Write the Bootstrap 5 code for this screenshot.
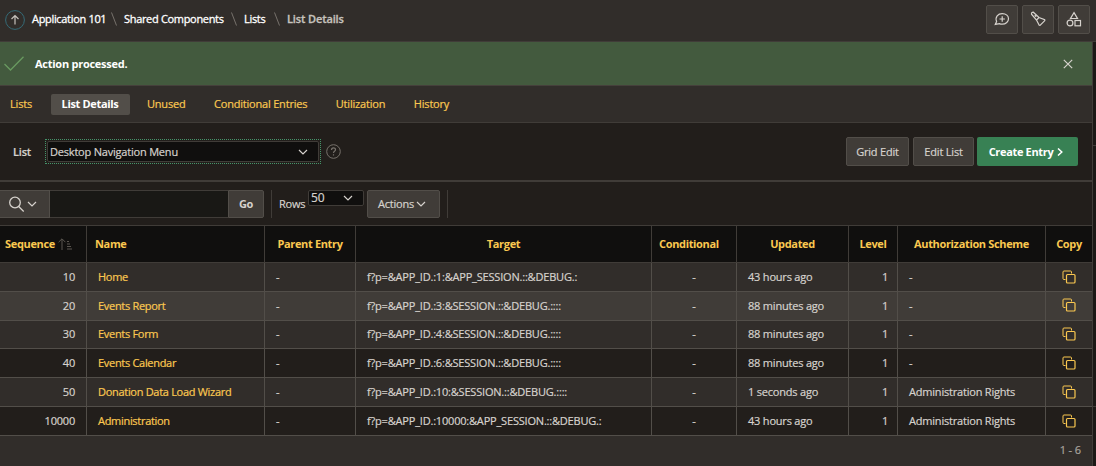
<!DOCTYPE html>
<html lang="en" data-bs-theme="dark">
<head>
<meta charset="utf-8">
<title>List Details</title>
<meta name="viewport" content="width=device-width, initial-scale=1">
<link rel="stylesheet" href="https://cdn.jsdelivr.net/npm/bootstrap@5.3.0/dist/css/bootstrap.min.css">
<style>
body{font:11px/16px "Open Sans","Noto Sans",sans-serif;letter-spacing:-.2px;background:#1c1916;color:#d6d2cd;height:466px;overflow:hidden;-webkit-text-stroke:.2px}
b,.fw-bold,th{letter-spacing:-.34px;-webkit-text-stroke:0}
.semi{font-weight:600}
svg{display:block;fill:none;stroke:currentColor;flex:none}
.dim{color:#77726c}
.topbar{height:42px;background:#312d2a;border-bottom:1px solid #403c38;padding:0 6px 4px 5px}
.crumb-list{color:#fff;margin-left:7px;letter-spacing:-.32px;white-space:nowrap;-webkit-text-stroke:.3px}
.crumb-list .here{color:#c6c2bd;letter-spacing:-.12px;margin-left:7px;font-weight:600}
.up-ring{margin-top:3px;color:#356b77}
.up-arrow{color:#c6c1bc;stroke:currentColor}
.page-main{width:1093px;border-right:1px solid #403c38;background:#221e1b;height:424px}
.side-panel{width:3px}
.side-panel div{border-bottom:1px solid #403c38}
.success-bar{height:43px;background:#435a3e;color:#fff}
.success-bar .tick{color:#699a60;margin-left:4px}
.tab-strip{height:38px;background:#312d2a;border-top:1px solid #45403b;border-bottom:1px solid #403c38;padding-top:1px}
.tab-strip a{color:#fbc850;text-decoration:none;height:21px;line-height:20px;border-radius:2px;text-align:center;white-space:nowrap}
.tab-strip a.on{background:#524e49;color:#fff}
.btn-tool{border:1px solid #524e49;background:#403c38;color:#d6d2cd;border-radius:2px;display:flex;align-items:center;justify-content:center}
.btn-icon{width:32px;height:29px}
.list-bar{height:59px;border-bottom:2px solid #403c38;padding:0 14px 0 13px}
.focus-frame{border:1px dotted #45946a;padding:1px;width:276px;height:25px;margin-left:12px}
.select-box{background:#100f0e;border:1px solid #403c38;border-radius:2px;height:21px;padding:0 10px 0 2px}
.btn-create{background:#388154;color:#fff;width:101px;height:29px;border-radius:2px;margin-left:3px;padding-right:3px}
.search-bar{height:43px;padding-top:8px}
.search-bar .h28{height:28px}
.search-field{width:178px;background:#191815;border:solid #403c38;border-width:1px 0}
.vline{width:1px;background:#403c38}
.list-table{table-layout:fixed;width:1092px;margin:0;border-collapse:separate;border-spacing:0}
.list-table th{height:38px;background:#100f0e;color:#fbc850;border:solid #403c38;border-width:1px 1px 1px 0;padding:0 0 1px;text-align:center;white-space:nowrap}
.list-table td{height:29px;background:#221e1b;border:solid #524e49;border-width:0 1px 1px 0;padding:0 11px;white-space:nowrap}
.list-table th:last-child,.list-table td:last-child{border-right:0}
.list-table .alt td{background:#312d2a}
.list-table .hot td{background:#403c38}
.list-table .hot td.gold{padding-bottom:2px}
.list-table .short td{height:28px;padding-bottom:1px}
.list-table a,.gold{color:#fbc850;text-decoration:none}
.list-table a{letter-spacing:-.3px}
.tgt{letter-spacing:-.19px}
.num{text-align:right}
.list-table td.num-lv{padding-right:9px}
.foot-bar{height:30px;background:#312d2a;color:#a8a39d;padding:6px 11px 0;text-align:right;letter-spacing:-.1px}
</style>
</head>
<body>
<svg width="0" height="0" class="position-absolute"><defs>
<symbol id="copy" viewBox="0 0 14 14"><path d="M3.5 9.500h-1.500a1 1 0 0 1-1-1v-6.500a1 1 0 0 1 1-1h6.500a1 1 0 0 1 1 1v1.500"/><rect x="4.500" y="4.500" width="8.500" height="8.500" rx="1" stroke-width="1.200"/></symbol>
<symbol id="down" viewBox="0 0 10 6"><path d="M1 1l4 4 4-4" stroke-width="1.200"/></symbol>
<symbol id="sep" viewBox="0 0 6 14"><path d="M.5.5l5 13"/></symbol>
</defs></svg>
<header class="topbar d-flex align-items-center">
  <svg class="up-ring" width="20" height="20" viewBox="0 0 20 20"><circle cx="10" cy="10" r="9.400"/><path class="up-arrow" d="M10 14.500v-9M6.500 9L10 5.500 13.500 9" stroke-width="1.200"/></svg>
  <nav class="crumb-list d-flex align-items-center">
    <span style="width:79px">Application 101</span>
    <svg class="dim" width="6" height="14"><use href="#sep"/></svg>
    <span style="margin-left:7px;width:107px">Shared Components</span>
    <svg class="dim" width="6" height="14"><use href="#sep"/></svg>
    <span style="margin-left:7px;width:30px">Lists</span>
    <svg class="dim" width="6" height="14"><use href="#sep"/></svg>
    <span class="here">List Details</span>
  </nav>
  <div class="d-flex ms-auto" style="gap:4px;padding-top:1px">
    <div class="btn-tool btn-icon"><svg width="16" height="16" viewBox="0 0 16 16" stroke-width="1.200"><path d="M2.600 10.500C.8 6 4 2.600 8.200 2.600c4 0 6.300 2.500 6.300 5.200s-2.500 5.400-6.300 5.400c-1.200 0-2-.2-2.800-.6L1.300 13.400zM8.200 5.300v5.400M5.500 8h5.400"/></svg></div>
    <div class="btn-tool btn-icon"><svg width="16" height="16" viewBox="0 0 16 16" stroke-width="1.200"><path d="M1.500 3.200Q1.300 1.200 3.300 1.200L9 6.500 14.700 8.700 14.800 9.600 10 14.400 9.200 14.300 6.500 9zM9 6.500L6.500 9M4.700 4.300l1.500 1.400"/></svg></div>
    <div class="btn-tool btn-icon"><svg width="16" height="16" viewBox="0 0 16 16" stroke-width="1.200"><path d="M8 1.600L11.500 7.500h-7z"/><circle cx="4" cy="12" r="2.900"/><rect x="9" y="9.500" width="5.500" height="5.300"/></svg></div>
  </div>
</header>
<div class="d-flex">
<main class="page-main">
  <div class="success-bar d-flex align-items-center">
    <svg class="tick" width="20" height="15" viewBox="0 0 20 15"><path d="M.5 8L6.500 14 19.500.8" stroke-width="1.300"/></svg>
    <b style="margin-left:11px;letter-spacing:-.26px">Action processed.</b>
    <svg class="ms-auto" style="margin-right:19px;color:#d6d2cd" width="10" height="10" viewBox="0 0 10 10"><path d="M.8.8l8.400 8.400M9.200.8L.8 9.200" stroke-width="1.200"/></svg>
  </div>
  <nav class="tab-strip d-flex align-items-center">
    <a href="#" style="margin-left:9px;width:24px">Lists</a>
    <a href="#" class="on fw-bold" style="margin-left:18px;width:79px;padding-right:1px">List Details</a>
    <a href="#" style="margin-left:17px;width:38px">Unused</a>
    <a href="#" style="margin-left:29px;width:93px">Conditional Entries</a>
    <a href="#" style="margin-left:28px;width:51px">Utilization</a>
    <a href="#" style="margin-left:27px;width:37px">History</a>
  </nav>
  <div class="list-bar d-flex align-items-center">
    <span class="semi" style="width:20px">List</span>
    <div class="focus-frame"><div class="select-box d-flex align-items-center justify-content-between"><span>Desktop Navigation Menu</span><svg width="10" height="6"><use href="#down"/></svg></div></div>
    <svg class="dim" width="15" height="15" viewBox="0 0 15 15" style="margin-left:5px"><circle cx="7.500" cy="7.500" r="6.800"/><path d="M5.500 6C5.500 3.200 9.500 3.300 9.500 5.700c0 1.600-2 1.500-2 3.200M7.500 10.200v1.200" stroke-width="1.200"/></svg>
    <div class="btn-tool ms-auto" style="width:63px;height:29px">Grid Edit</div>
    <div class="btn-tool" style="width:61px;height:29px;margin-left:4px">Edit List</div>
    <div class="btn-create d-flex align-items-center justify-content-center"><b>Create Entry</b><svg width="6" height="8" viewBox="0 0 6 8" style="margin-left:4px"><path d="M1 .5L4.800 4 1 7.500" stroke-width="1.500"/></svg></div>
  </div>
  <div class="search-bar d-flex align-items-start">
    <div class="btn-tool h28" style="width:50px;border-left:0;border-radius:0;gap:2px;padding-right:4px"><svg width="17" height="16" viewBox="0 0 17 16"><circle cx="7" cy="6.500" r="5.300" stroke-width="1.300"/><path d="M10.700 10.500l5 5" stroke-width="1.300"/></svg><svg width="10" height="6"><use href="#down"/></svg></div>
    <div class="search-field h28"></div>
    <div class="btn-tool h28 fw-bold" style="width:36px;border-radius:0 2px 2px 0">Go</div>
    <div class="vline h28" style="margin-left:7px"></div>
    <span style="margin:6px 0 0 7px;width:26px">Rows</span>
    <div class="select-box d-flex align-items-center justify-content-between" style="margin-left:3px;width:56px;height:16px">
      <span style="font-size:12px">50</span><svg width="10" height="6"><use href="#down"/></svg></div>
    <div class="btn-tool h28" style="margin-left:3px;width:73px;gap:2px;padding-right:3px"><span>Actions</span><svg width="10" height="6"><use href="#down"/></svg></div>
    <div class="vline h28" style="margin-left:7px"></div>
  </div>
  <table class="list-table">
    <colgroup><col style="width:87px"><col style="width:178px"><col style="width:91px"><col style="width:296px"><col style="width:85px"><col style="width:112px"><col style="width:49px"><col style="width:148px"><col style="width:46px"></colgroup>
    <thead><tr>
      <th><div class="d-flex align-items-center" style="padding-left:5px">Sequence<svg width="15" height="12" viewBox="0 0 15 12" style="margin-left:3px;color:#5b5650"><path d="M4 12V1M.6 4.200L4 .8l3.400 3.400M9 3.500h2M9 6h3M9 8.500h4M9 11h5"/></svg></div></th>
      <th class="text-start" style="padding-left:8px">Name</th><th>Parent Entry</th><th>Target</th><th class="text-start" style="padding-left:7px">Conditional</th><th>Updated</th><th>Level</th><th>Authorization Scheme</th><th>Copy</th>
    </tr></thead>
    <tbody id="rows"></tbody>
  </table>
  <div class="foot-bar">1 - 6</div>
</main>
<aside class="side-panel"><div style="height:104px"></div><div style="height:261px"></div></aside>
</div>
<script>
const rows = [
  [10,'Home','f?p=&APP_ID.:1:&APP_SESSION.::&DEBUG.:','43 hours ago','-','alt'],
  [20,'Events Report','f?p=&APP_ID.:3:&SESSION.::&DEBUG.::::','88 minutes ago','-','hot'],
  [30,'Events Form','f?p=&APP_ID.:4:&SESSION.::&DEBUG.::::','88 minutes ago','-','alt short'],
  [40,'Events Calendar','f?p=&APP_ID.:6:&SESSION.::&DEBUG.::::','88 minutes ago','-',''],
  [50,'Donation Data Load Wizard','f?p=&APP_ID.:10:&SESSION.::&DEBUG.::::','1 seconds ago','Administration Rights','alt'],
  [10000,'Administration','f?p=&APP_ID.:10000:&APP_SESSION.::&DEBUG.:','43 hours ago','Administration Rights','']
];
document.getElementById('rows').innerHTML = rows.map(r => `<tr class="${r[5]}">
<td class="num">${r[0]}</td><td><a href="#">${r[1]}</a></td><td>-</td><td class="tgt">${r[2].replace(/&/g,'&amp;')}</td>
<td class="text-center">-</td><td>${r[3]}</td><td class="num num-lv">1</td><td>${r[4]}</td>
<td class="gold"><svg class="mx-auto" width="14" height="14"><use href="#copy"/></svg></td></tr>`).join('');
</script>
<script src="https://cdn.jsdelivr.net/npm/bootstrap@5.3.0/dist/js/bootstrap.bundle.min.js"></script>
</body>
</html>
